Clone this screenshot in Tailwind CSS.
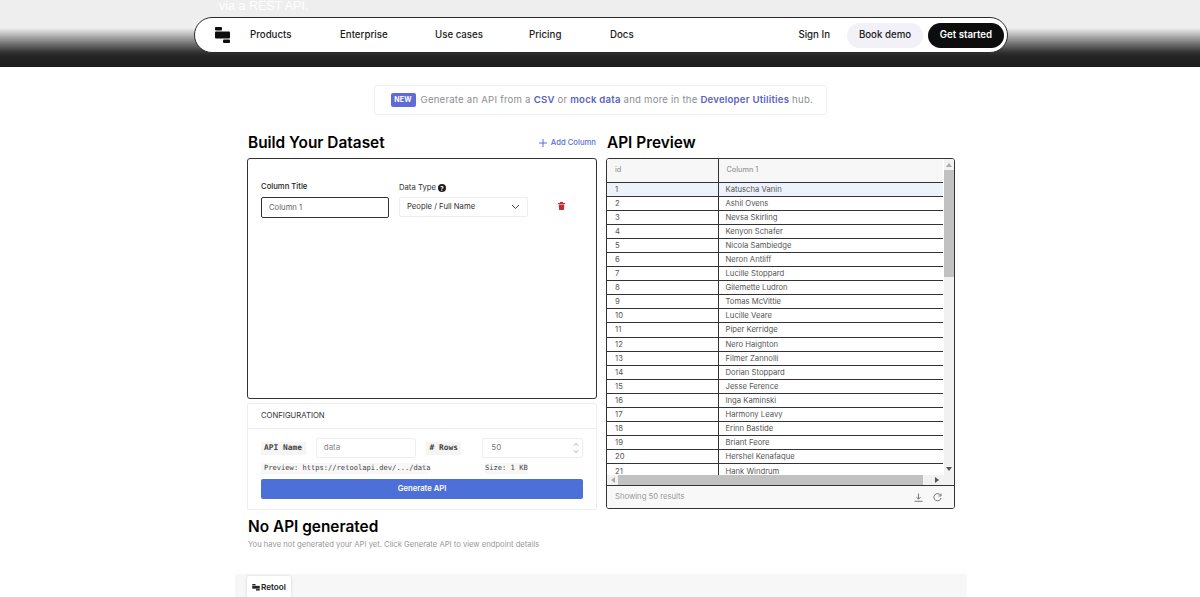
<!DOCTYPE html>
<html lang="en">
<head>
  <meta charset="utf-8">
  <title>Retool API Generator</title>
  <script src="https://cdn.jsdelivr.net/npm/@tailwindcss/browser@4"></script>
</head>
<body class="bg-white font-['Inter',sans-serif] text-black overflow-hidden h-[597px]">

  <!-- header band -->
  <div class="h-[67px] pt-[17px] relative bg-[linear-gradient(to_bottom,#eeeeee_0px,#eeeeee_28px,#b8b8b8_35px,#777777_43px,#333333_52px,#242424_56px,#1e1e1e_66px)]">
    <div class="absolute left-[219px] top-[-4px] text-[12.5px] leading-5 text-white font-['Liberation_Sans',sans-serif]">via a REST API.</div>
    <nav class="relative ml-[194px] w-[814px] h-[36px] bg-white border border-[#2a2a2a] rounded-[18px] flex items-center pl-[20px] pr-[3px] text-[9.7px] font-medium text-[#1a1a1a] whitespace-nowrap">
      <svg class="w-[15px] h-[16px] mr-[20px]" viewBox="0 0 15 16" fill="#0d0d0d">
        <rect x="0" y="0" width="7" height="3.5" rx="1"/>
        <rect x="0" y="4.5" width="15" height="7" rx="1"/>
        <rect x="8" y="12.5" width="7" height="3.5" rx="1"/>
      </svg>
      <a class="w-[90px]">Products</a>
      <a class="w-[95px]">Enterprise</a>
      <a class="w-[94px]">Use cases</a>
      <a class="w-[81px]">Pricing</a>
      <a>Docs</a>
      <a class="ml-auto mr-[17px]">Sign In</a>
      <a class="w-[76px] h-[25px] rounded-full bg-[#f1f1f7] flex items-center justify-center mr-[5px]">Book demo</a>
      <a class="w-[76px] h-[25px] rounded-full bg-[#0d0d0d] text-white font-semibold flex items-center justify-center">Get started</a>
    </nav>
  </div>

  <!-- utilities banner -->
  <div class="flex justify-center mt-[18px]">
    <div class="h-[30px] w-[453px] border border-[#f1f1f4] rounded-[3px] flex items-center pl-[16px] text-[9.6px] text-[#8d8d94] tracking-[0.22px] whitespace-nowrap">
      <span class="flex-none w-[25px] h-[14px] rounded-[2px] bg-[#5f6bd6] text-white text-[7px] font-bold flex items-center justify-center mr-[5px]">NEW</span>
      <span>Generate an API from a <b class="font-semibold text-[#5a63c4]">CSV</b> or <b class="font-semibold text-[#5a63c4]">mock data</b> and more in the <b class="font-semibold text-[#5a63c4]">Developer Utilities</b> hub.</span>
    </div>
  </div>

  <!-- two columns -->
  <div class="flex gap-[9px] ml-[247px] mt-[15px]">
    <div class="w-[350px]">
      <div class="h-[26px] flex items-center justify-between pl-[1px]">
        <h2 class="text-[15.4px] font-semibold">Build Your Dataset</h2>
        <a class="flex items-center text-[7.7px] font-medium text-[#5a6fd0] gap-[4px] pr-[1px]">
          <svg class="w-[8px] h-[8px]" viewBox="0 0 8 8" stroke="#5a6fd0" stroke-width="1"><path d="M4 0v8M0 4h8"/></svg>
          Add Column
        </a>
      </div>

      <div class="h-[241px] mt-[2px] border border-[#333] rounded-[3px] px-[13px] pt-[23px]">
        <div class="flex">
          <div class="w-[128px]">
            <div class="-mt-[1px] text-[7.7px] font-medium text-[#222] h-[11px] leading-[11px]">Column Title</div>
            <div class="mt-[5px] h-[21px] border border-[#333] rounded-[2px] flex items-center pl-[7px] text-[7.7px] text-[#666]">Column 1</div>
          </div>
          <div class="w-[129px] ml-[10px]">
            <div class="text-[7.7px] text-[#333] h-[12px] flex items-center gap-[2px]">Data Type
              <span class="w-[8px] h-[8px] rounded-full bg-[#1c1c1c] text-white text-[6px] font-bold flex items-center justify-center">?</span>
            </div>
            <div class="mt-[3px] h-[20px] border border-[#eeeeee] rounded-[2px] flex items-center justify-between px-[7px] text-[7.7px] text-[#333]">
              People / Full Name
              <svg class="w-[9px] h-[6px]" viewBox="0 0 9 6" fill="none" stroke="#444" stroke-width="1"><path d="M1 1l3.5 3.5L8 1"/></svg>
            </div>
          </div>
          <svg class="w-[7px] h-[8px] ml-[30px] mt-[20px]" viewBox="0 0 7 8" fill="#c62b35"><rect x="0" y="1" width="7" height="1"/><rect x="2" y="0" width="3" height="1"/><path d="M0.7 2.4h5.6l-.4 5.6h-4.8z"/></svg>
        </div>
      </div>

      <div class="h-[107px] mt-[4px] border border-[#eeeeee] rounded-[2px]">
        <div class="h-[25px] border-b border-[#eeeeee] pl-[13px] flex items-center text-[7.7px] text-[#333]">CONFIGURATION</div>
        <div class="px-[13px] pt-[9px]">
          <div class="flex items-center h-[20px] font-['DejaVu_Sans_Mono',monospace] text-[7.9px] font-bold text-[#444] whitespace-nowrap">
            <span class="bg-[#f5f5f5] px-[3px] w-[45px] h-[13px] flex items-center">API Name</span>
            <span class="w-[101px] h-[20px] ml-[10px] border border-[#eeeeee] rounded-[2px] flex items-center pl-[7px] font-['Inter',sans-serif] font-normal text-[#888]">data</span>
            <span class="bg-[#f5f5f5] px-[3px] ml-[10px] w-[35px] h-[13px] flex items-center"># Rows</span>
            <span class="w-[101px] h-[20px] ml-[21px] border border-[#eeeeee] rounded-[2px] flex items-center justify-between pl-[8px] pr-[3px] font-['Inter',sans-serif] font-normal text-[#777]">50
              <svg class="w-[6px] h-[12px]" viewBox="0 0 6 12" fill="none" stroke="#888" stroke-width="0.8"><path d="M1 3.5l2-2 2 2M1 8.5l2 2 2-2"/></svg>
            </span>
          </div>
          <div class="flex h-[11px] mt-[5px] items-center font-['DejaVu_Sans_Mono',monospace] text-[7.1px] text-[#444] whitespace-nowrap">
            <span class="bg-[#f7f7f7] w-[167px] pl-[3px]">Preview: https://retoolapi.dev/.../data</span>
            <span class="ml-[57px] bg-[#f7f7f7]">Size: 1 KB</span>
          </div>
          <button class="mt-[5px] w-full h-[20px] rounded-[2px] bg-[#4d6fd8] text-white text-[7.7px] font-semibold flex items-center justify-center">Generate API</button>
        </div>
      </div>
    </div>

    <div class="w-[349px]">
      <h2 class="h-[26px] pl-[1px] text-[15.4px] leading-[26px] font-semibold">API Preview</h2>
      <div class="h-[351px] mt-[2px] border border-[#333] rounded-[3px] flex flex-col overflow-hidden">
        <div class="relative h-[326px] flex-none overflow-hidden">
          <!-- vertical scrollbar -->
          <div class="absolute right-0 top-0 bottom-0 w-[10px] bg-[#f1f1f1] z-10">
            <div class="absolute top-[4px] left-[2px] border-x-[3px] border-x-transparent border-b-[4px] border-b-[#aaa]"></div>
            <div class="absolute top-[11px] left-0 w-[10px] h-[107px] bg-[#c1c1c1]"></div>
            <div class="absolute bottom-[14px] left-[2px] border-x-[3px] border-x-transparent border-t-[4px] border-t-[#555]"></div>
          </div>
          <!-- horizontal scrollbar -->
          <div class="absolute left-0 right-0 bottom-0 h-[10px] bg-[#f1f1f1] z-10">
            <div class="absolute left-[11px] w-[305px] top-0 h-[10px] bg-[#c1c1c1]"></div>
            <div class="absolute left-[4px] top-[2px] border-y-[3px] border-y-transparent border-r-[4px] border-r-[#aaa]"></div>
            <div class="absolute right-[15px] top-[2px] border-y-[3px] border-y-transparent border-l-[4px] border-l-[#555]"></div>
          </div>
          <table class="w-[336px] border-collapse table-fixed text-[7.7px] text-[#555]">
            <thead>
              <tr class="h-[23px] bg-[#f7f7f7] text-[7.3px] text-[#999] font-medium text-left">
                <th class="w-[111px] font-medium pl-[8px] pt-[1px] border-r border-[#333]">id</th>
                <th class="font-medium pl-[8px] pt-[1px]">Column 1</th>
              </tr>
            </thead>
            <tbody id="rows"></tbody>
          </table>
        </div>
        <div class="flex-1 border-t border-[#333] bg-[#f8f8f8] flex items-center pl-[8px] pr-[12px] text-[7.7px] text-[#999]">
          Showing 50 results
          <svg class="w-[9px] h-[9px] ml-auto" viewBox="0 0 9 9" fill="none" stroke="#777" stroke-width="1"><path d="M4.5 0.5v5.5M2.3 4l2.2 2.2L6.7 4M0.5 8.3h8"/></svg>
          <svg class="w-[9px] h-[9px] ml-[10px]" viewBox="0 0 9 9" fill="none" stroke="#777" stroke-width="1"><path d="M7.6 2.4A3.6 3.6 0 1 0 8 5"/><path d="M8 0.5v2.5H5.5" /></svg>
        </div>
      </div>
    </div>
  </div>

  <!-- empty state -->
  <div class="ml-[248px] mt-[5px]">
    <h2 class="text-[15.4px] leading-[24px] font-semibold">No API generated</h2>
    <p class="text-[7.65px] leading-[12px] text-[#999]">You have not generated your API yet. Click Generate API to view endpoint details</p>
  </div>

  <!-- footer strip -->
  <div class="ml-[235px] w-[732px] h-[40px] mt-[23px] bg-[#f7f7f7] pl-[12px] pt-[2px]">
    <div class="w-[44px] h-[22px] bg-white rounded-t-[2px] shadow-[0_0_3px_rgba(0,0,0,0.15)] flex items-center justify-center gap-[1px] text-[8.2px] font-semibold text-[#222]">
      <svg class="w-[8px] h-[7px]" viewBox="0 0 16 15" fill="#222"><rect width="7" height="3"/><rect y="4" width="16" height="6"/><rect x="8" y="11" width="8" height="3"/></svg>
      Retool
    </div>
  </div>

  <script>
    var names = ["Katuscha Vanin","Ashil Ovens","Nevsa Skirling","Kenyon Schafer","Nicola Sambiedge","Neron Antliff","Lucille Stoppard","Gilemette Ludron","Tomas McVittie","Lucille Veare","Piper Kerridge","Nero Haighton","Filmer Zannolli","Dorian Stoppard","Jesse Ference","Inga Kaminski","Harmony Leavy","Erinn Bastide","Briant Feore","Hershel Kenafaque","Hank Windrum"];
    var bodydata = document.getElementById("rows");
    names.forEach(function (name, i) {
      var row = document.createElement("tr");
      row.className = i == 0 ? "h-[14.1px] bg-[#eef2fb]" : "h-[14.1px]";
      row.innerHTML =
        '<td class="pl-[8px] border-t border-[#333] border-r leading-[13px]">' + (i + 1) + '</td>' +
        '<td class="pl-[7px] border-t border-[#333] leading-[13px]">' + name + '</td>';
      bodydata.appendChild(row);
    });
  </script>
</body>
</html>
